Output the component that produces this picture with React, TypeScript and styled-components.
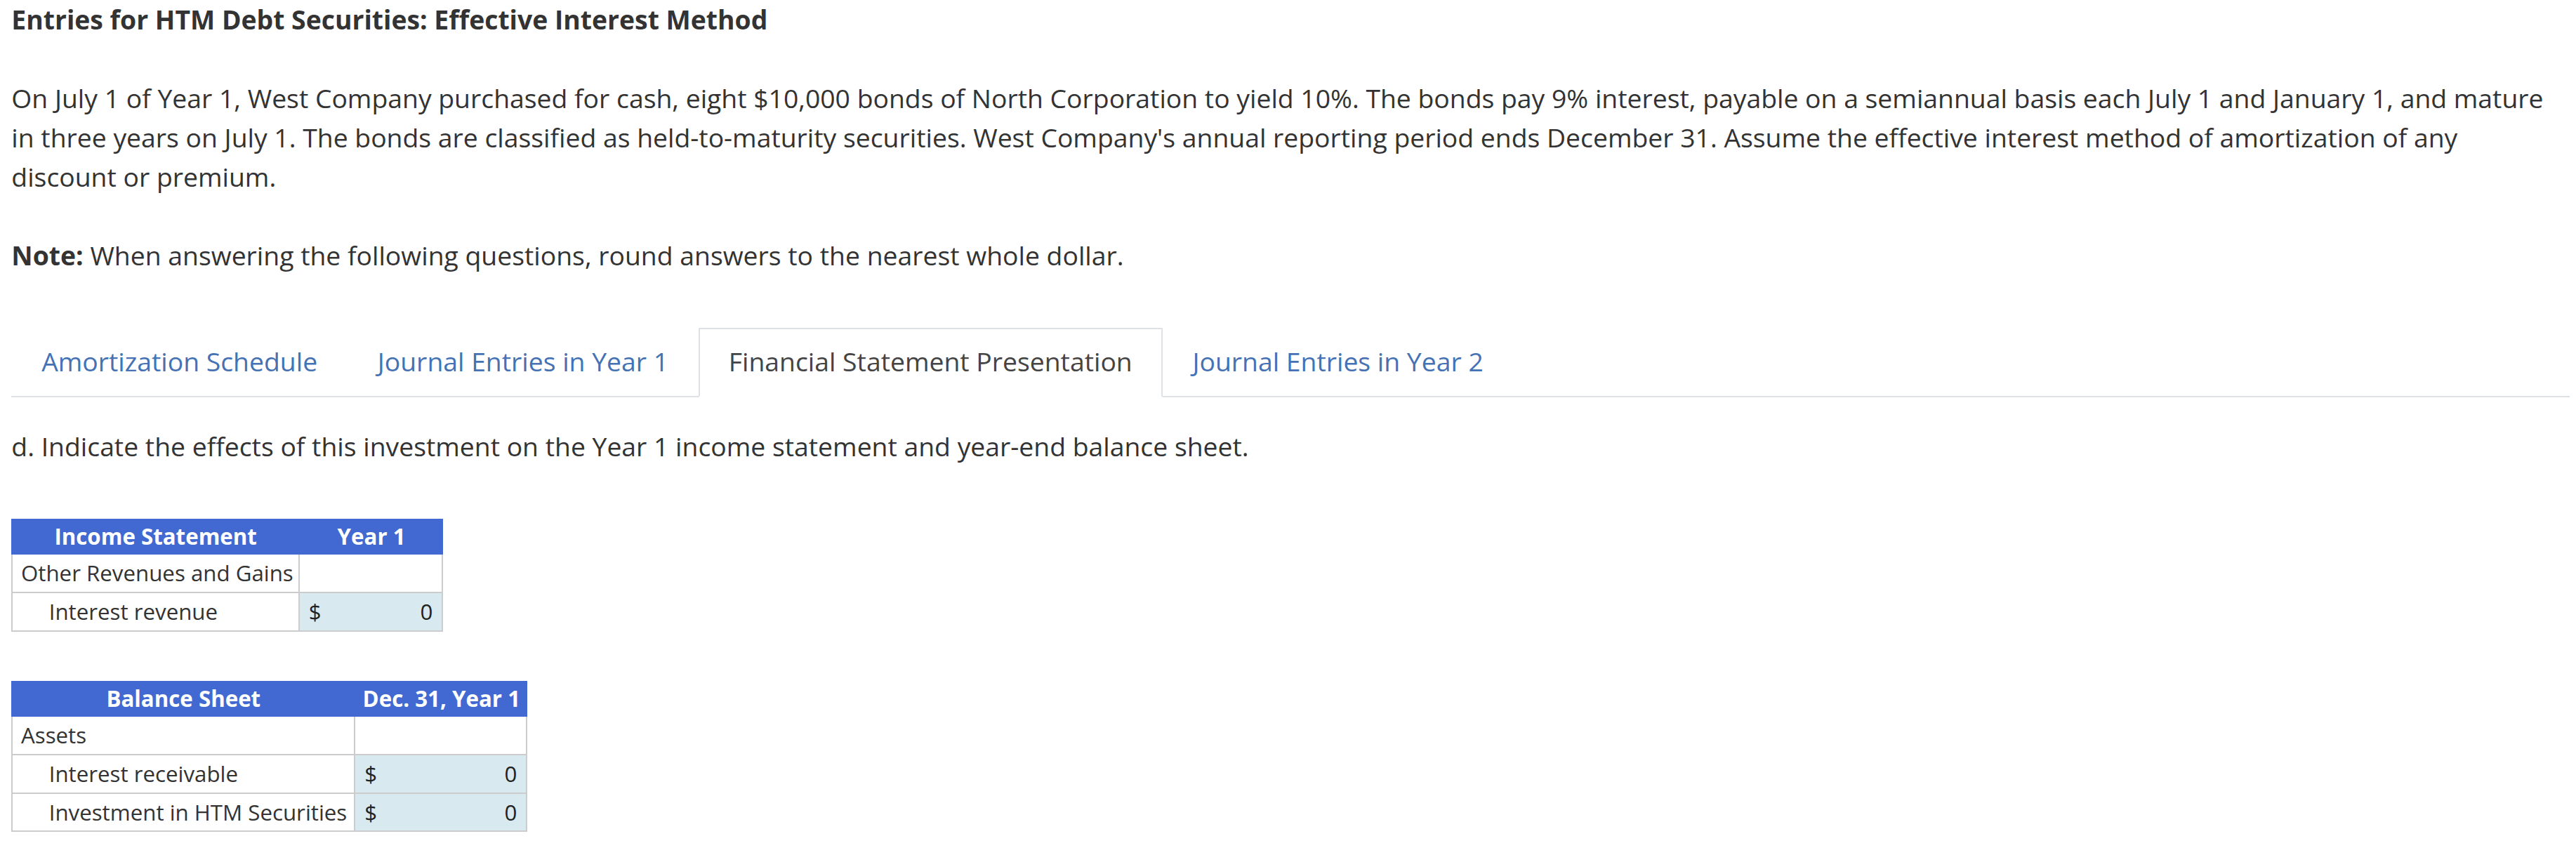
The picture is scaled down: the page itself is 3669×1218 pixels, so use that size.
import styled, { createGlobalStyle } from "styled-components";
import { FC, useState } from "react";

const GlobalStyle = createGlobalStyle`
  html, body {
    margin: 0;
    padding: 0;
    background: #fff;
  }
`;

interface SheetRow {
  label: string;
  indent?: boolean;
  amount?: number;
}

interface SheetData {
  title: string;
  period: string;
  labelWidth: number;
  amountWidth: number;
  rows: Array<SheetRow>;
}

const tabs = [
  "Amortization Schedule",
  "Journal Entries in Year 1",
  "Financial Statement Presentation",
  "Journal Entries in Year 2",
];

const sheets: Array<SheetData> = [
  {
    title: "Income Statement",
    period: "Year 1",
    labelWidth: 176,
    amountWidth: 87.5,
    rows: [
      { label: "Other Revenues and Gains" },
      { label: "Interest revenue", indent: true, amount: 0 },
    ],
  },
  {
    title: "Balance Sheet",
    period: "Dec. 31, Year 1",
    labelWidth: 210,
    amountWidth: 105,
    rows: [
      { label: "Assets" },
      { label: "Interest receivable", indent: true, amount: 0 },
      { label: "Investment in HTM Securities", indent: true, amount: 0 },
    ],
  },
];

const StatementTable: FC<{ data: SheetData }> = ({ data }) => (
  <Sheet $width={data.labelWidth + data.amountWidth}>
    <thead>
      <tr>
        <HeadCell $width={data.labelWidth}>{data.title}</HeadCell>
        <HeadCell $width={data.amountWidth}>{data.period}</HeadCell>
      </tr>
    </thead>
    <tbody>
      {data.rows.map((row) => (
        <tr key={row.label}>
          <LabelCell $indent={row.indent}>{row.label}</LabelCell>
          {row.amount === undefined ? (
            <AmountCell />
          ) : (
            <AmountCell $input>
              <Amount>
                <span>$</span>
                <span>{row.amount}</span>
              </Amount>
            </AmountCell>
          )}
        </tr>
      ))}
    </tbody>
  </Sheet>
);

const App: FC = () => {
  const [activeTab, setActiveTab] = useState(2);

  return (
    <>
      <GlobalStyle />
      <Page>
        <Title>Entries for HTM Debt Securities: Effective Interest Method</Title>
        <Paragraph>
          On July 1 of Year 1, West Company purchased for cash, eight $10,000
          bonds of North Corporation to yield 10%. The bonds pay 9% interest,
          payable on a semiannual basis each July 1 and January 1, and mature
          in three years on July 1. The bonds are classified as
          held-to-maturity securities. West Company's annual reporting period
          ends December 31. Assume the effective interest method of
          amortization of any discount or premium.
        </Paragraph>
        <Paragraph>
          <strong>Note:</strong> When answering the following questions, round
          answers to the nearest whole dollar.
        </Paragraph>
        <TabBar>
          {tabs.map((tab, index) => (
            <Tab
              key={tab}
              $active={index === activeTab}
              onClick={() => setActiveTab(index)}
            >
              {tab}
            </Tab>
          ))}
        </TabBar>
        <TabPanel>
          <Question>
            d. Indicate the effects of this investment on the Year 1 income
            statement and year-end balance sheet.
          </Question>
          {sheets.map((sheet) => (
            <StatementTable key={sheet.title} data={sheet} />
          ))}
        </TabPanel>
      </Page>
    </>
  );
};

export default App;

const Page = styled.div`
  zoom: 2.3333;
  padding: 0 4px 0 7px;
  font-family: "Open Sans", "Noto Sans", sans-serif;
  font-size: 16px;
  line-height: 24px;
  color: #333;
`;

const Title = styled.h1`
  margin: 0 0 24px;
  font-size: 16px;
  line-height: 24px;
  font-weight: 700;
`;

const Paragraph = styled.p`
  margin: 0 0 24px;
  padding-right: 10px;

  & strong {
    font-weight: 700;
  }
`;

const TabBar = styled.div`
  display: flex;
  margin-top: 32px;
  border-bottom: 1px solid #dee2e6;
`;

const Tab = styled.button<{ $active?: boolean }>`
  margin: 0 0 -1px;
  padding: 8px 17.5px 9px;
  font-family: inherit;
  font-size: 16px;
  line-height: 24px;
  cursor: pointer;
  border: 1px solid ${({ $active }) => ($active ? "#dee2e6" : "transparent")};
  border-bottom-color: ${({ $active }) => ($active ? "#fff" : "transparent")};
  background: ${({ $active }) => ($active ? "#fff" : "transparent")};
  color: ${({ $active }) => ($active ? "#444" : "#4472b4")};
`;

const TabPanel = styled.div`
  padding-top: 18px;
`;

const Question = styled.p`
  margin: 0 0 32px;
`;

const Sheet = styled.table<{ $width: number }>`
  width: ${({ $width }) => `${$width}px`};
  table-layout: fixed;
  border-collapse: separate;
  border-spacing: 0;
  margin-bottom: 30px;
  font-family: "Open Sans", "Noto Sans", sans-serif;
  font-size: 13.4px;
  line-height: 20px;
  color: #333;
`;

const HeadCell = styled.th<{ $width: number }>`
  box-sizing: border-box;
  width: ${({ $width }) => `${$width}px`};
  height: 22px;
  padding: 1px;
  background: #4169d1;
  color: #fff;
  font-weight: 700;
  text-align: center;
  vertical-align: middle;
  white-space: nowrap;
`;

const LabelCell = styled.td<{ $indent?: boolean }>`
  box-sizing: border-box;
  height: 23.5px;
  padding: 1px 4px 1px ${({ $indent }) => ($indent ? "22px" : "5px")};
  border-left: 1px solid #ccc;
  border-right: 1px solid #ccc;
  border-bottom: 1px solid #ccc;
  vertical-align: middle;
  white-space: nowrap;
`;

const AmountCell = styled.td<{ $input?: boolean }>`
  box-sizing: border-box;
  height: 23.5px;
  padding: 1px 5.5px;
  border-right: 1px solid #ccc;
  border-bottom: 1px solid #ccc;
  vertical-align: middle;
  background: ${({ $input }) => ($input ? "#d9e9f0" : "#fff")};
`;

const Amount = styled.div`
  display: flex;
  justify-content: space-between;
  color: #222;
`;
